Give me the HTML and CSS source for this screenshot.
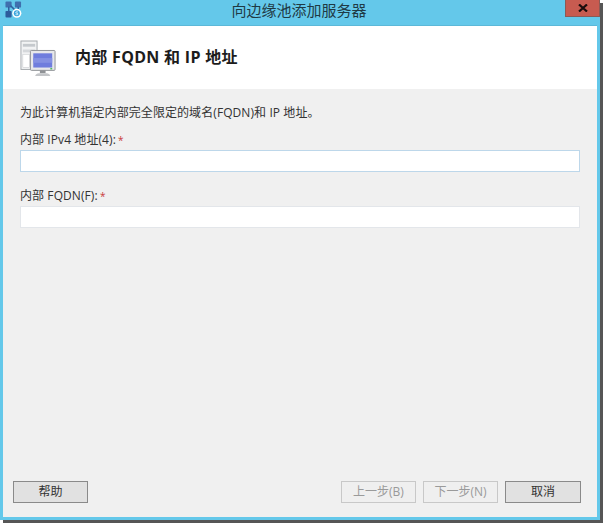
FILE: index.html
```html
<!DOCTYPE html>
<html lang="zh">
<head>
<meta charset="utf-8">
<title>向边缘池添加服务器</title>
<link rel="stylesheet" href="styles.css">
</head>
<body>
<div class="window">
  <div class="titlebar">
    <svg class="app-icon" width="17" height="17" viewBox="0 0 18 18">
      <rect x="0.500" y="0.500" width="6.500" height="6.500" rx="1" fill="#3f6fae"/>
      <rect x="10.500" y="0.500" width="6.500" height="6.500" rx="1" fill="#3f6fae"/>
      <rect x="0.500" y="10.500" width="6.500" height="7" rx="1" fill="#2d5c9c"/>
      <path d="M4 6v6M6 5l6 6M14 6v3" stroke="#2f5f9f" stroke-width="1.600" fill="none"/>
      <circle cx="12.500" cy="13" r="4.800" fill="#fff"/>
      <circle cx="12.500" cy="13" r="3.200" fill="#39a5dc"/>
      <path d="M13.800 11.800c-.9-.7-2.500-.4-2.400.5.1.9 2.500.6 2.400 1.500-.1.900-1.700 1-2.600.3" stroke="#fff" stroke-width=".8" fill="none"/>
    </svg>
    <div class="title">向边缘池添加服务器</div>
    <div class="close">
      <svg width="10" height="8" viewBox="0 0 10 8"><path d="M1 0.500L9 7.500M9 0.500L1 7.500" stroke="#1a0d0c" stroke-width="2.200"/></svg>
    </div>
  </div>
  <div class="client">
    <header class="header">
      <svg class="header-icon" width="36" height="38" viewBox="0 0 38 40">
        <rect x="1" y="1" width="17" height="30" fill="#f2f3f4" stroke="#a3a7ab"/>
        <rect x="3" y="4" width="13" height="3" fill="#c5c9cd"/>
        <rect x="3" y="10" width="13" height="3" fill="#d5d8db"/>
        <rect x="3" y="15" width="7" height="14" fill="#fff" stroke="#c7cacd" stroke-width=".6"/>
        <rect x="11" y="11" width="26" height="21" rx="1" fill="#e7e8ea" stroke="#8d9094"/>
        <rect x="14" y="14" width="20" height="15" fill="#6f7ddd"/>
        <rect x="14" y="19" width="20" height="5" fill="#8490e2"/>
        <rect x="21" y="32" width="6" height="3" fill="#8f9296"/>
        <path d="M16 38q1-3 4-3h8q3 0 4 3z" fill="#c3c5c8"/>
        <rect x="32" y="29.500" width="2" height="1.500" fill="#4dbb5f"/>
      </svg>
      <h1 class="heading">内部 FQDN 和 IP 地址</h1>
    </header>
    <main class="body">
      <p class="intro">为此计算机指定内部完全限定的域名(FQDN)和 IP 地址。</p>
      <div class="field first">
        <label class="label" for="ip">内部 IPv4 地址(4): <span class="req">*</span></label>
        <input id="ip" class="input focus" type="text">
      </div>
      <div class="field">
        <label class="label" for="fqdn">内部 FQDN(F): <span class="req">*</span></label>
        <input id="fqdn" class="input" type="text">
      </div>
      <div class="buttons">
        <button class="btn">帮助</button>
        <div class="spacer"></div>
        <button class="btn off" disabled>上一步(B)</button>
        <button class="btn off" disabled>下一步(N)</button>
        <button class="btn wide">取消</button>
      </div>
    </main>
  </div>
</div>
</body>
</html>
```
FILE: styles.css
```css
* { box-sizing: border-box; }
html, body { margin: 0; padding: 0; background: #fff; }
body {
  width: 604px;
  height: 524px;
  overflow: hidden;
  font-family: "Open Sans", "Noto Sans CJK SC", sans-serif;
  font-size: 12px;
  letter-spacing: 0.08px;
  color: #333;
}
.window {
  width: 600px;
  height: 520px;
  background: #64c8ea;
  box-shadow: 3px 3px 0 #565656;
  display: flex;
  flex-direction: column;
  padding: 0 3px 3px 3px;
}
.titlebar {
  height: 25px;
  flex: none;
  display: flex;
  position: relative;
  justify-content: center;
}
.app-icon { position: absolute; left: 2px; top: 1px; }
.title {
  font-size: 15px;
  line-height: 21px;
  color: #1f3a44;
  letter-spacing: 0;
  margin-left: -2px;
}
.close {
  position: absolute;
  right: -3px;
  top: 0;
  width: 35px;
  height: 17px;
  background: #c75b50;
  border: 1px solid #8b5a55;
  border-top: 0;
  display: flex;
  align-items: center;
  justify-content: center;
}
.client {
  flex: 1;
  display: flex;
  flex-direction: column;
  background: #f0f0f0;
  border-top: 1px solid #5cb8d8;
}
.header {
  height: 63px;
  flex: none;
  background: #fff;
  display: flex;
  align-items: center;
  padding-left: 17px;
}
.header-icon { flex: none; align-self: flex-start; margin-top: 14px; }
.heading {
  margin: -2px 0 0 19px;
  font-size: 16px;
  letter-spacing: 0.3px;
  font-weight: 700;
  color: #1c1c1c;
  line-height: 22px;
}
.body {
  flex: 1;
  display: flex;
  flex-direction: column;
  padding: 15px 16px 14px 17px;
}
.intro { margin: 0; line-height: 17px; font-size: 12px; white-space: nowrap; }
.field { display: flex; flex-direction: column; margin-top: 16px; }
.field.first { margin-top: 11px; }
.label { line-height: 16px; height: 18px; white-space: nowrap; }
.req { color: #c8383a; font-size: 10px; margin-left: -1px; }
.input {
  display: block;
  width: 560px;
  height: 22px;
  margin: 0;
  padding: 0;
  background: #fff;
  border: 1px solid #e3e6ea;
  outline: 0;
}
.input.focus { border-color: #bdd7ea; }
.buttons {
  margin-top: auto;
  margin-left: -7px;
  display: flex;
  gap: 7px;
}
.spacer { flex: 1; }
.btn {
  width: 75px;
  height: 22px;
  padding: 0;
  font: inherit;
  line-height: 18px;
  color: #333;
  background: #e1e1e1;
  border: 1px solid #8a8a8a;
}
.btn.wide { width: 76px; }
.btn.off {
  color: #9a9a9a;
  background: #efefef;
  border-color: #c8c8c8;
}
```
